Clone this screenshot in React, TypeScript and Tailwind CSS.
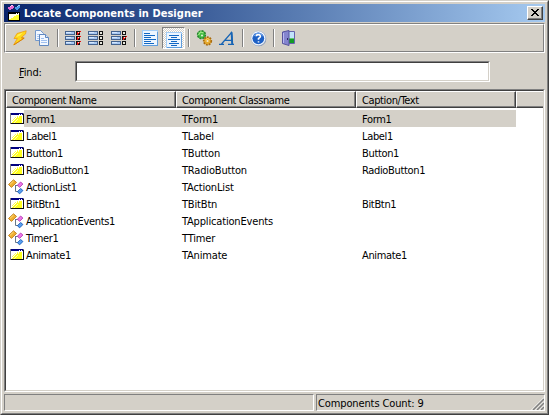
import React from "react";

type Row = { kind: "win" | "comp"; name: string; cls: string; cap: string };

const rows: Row[] = [
  { kind: "win", name: "Form1", cls: "TForm1", cap: "Form1" },
  { kind: "win", name: "Label1", cls: "TLabel", cap: "Label1" },
  { kind: "win", name: "Button1", cls: "TButton", cap: "Button1" },
  { kind: "win", name: "RadioButton1", cls: "TRadioButton", cap: "RadioButton1" },
  { kind: "comp", name: "ActionList1", cls: "TActionList", cap: "" },
  { kind: "win", name: "BitBtn1", cls: "TBitBtn", cap: "BitBtn1" },
  { kind: "comp", name: "ApplicationEvents1", cls: "TApplicationEvents", cap: "" },
  { kind: "comp", name: "Timer1", cls: "TTimer", cap: "" },
  { kind: "win", name: "Animate1", cls: "TAnimate", cap: "Animate1" },
];

const TitleIcon = () => (
  <svg width="16" height="16" viewBox="0 0 16 16" shapeRendering="crispEdges">
    <path d="M3 0h2v1h1v2H5v1H3v1H1V4H0V2h2V1h1z" fill="#e868d0" />
    <path d="M3 0h2v1H3zM2 1h1v1H2z" fill="#ffc0f0" />
    <path d="M10 0h2v3h-1v1h-1v1H8V4H7V2h2V1h1z" fill="#4898e8" />
    <path d="M10 0h2v1h-2zM9 1h1v1H9z" fill="#a0d0f8" />
    <path d="M0 7h12v9H0z" fill="#000" />
    <path d="M1 9h10v6H1z" fill="#ffff30" />
    <path d="M1 9h10v1H1zM1 10h7v1H1zM1 11h5v1H1zM1 12h4v1H1zM1 13h2v1H1z" fill="#fffff0" />
    <path d="M8 8h1v1H8zM10 8h1v1h-1z" fill="#fff" />
  </svg>
);

const WindowIcon = () => (
  <svg width="16" height="16" viewBox="0 0 16 16" shapeRendering="crispEdges">
    <path d="M2 3h14v11H2z" fill="#808080" />
    <path d="M3 13h13v1H3zM15 4h1v10h-1z" fill="#101010" />
    <path d="M3 4h12v9H3z" fill="#fff" />
    <path d="M3 3h12v2H3z" fill="#000080" />
    <path d="M11 4h1v1h-1zM13 4h1v1h-1z" fill="#fff" />
    <path d="M11 6h3v1h-3zM9 7h5v1H9zM8 8h6v1H8zM7 9h7v1H7zM6 10h8v1H6zM5 11h9v1H5zM4 12h10v1H4z" fill="#ffff20" />
    <path d="M9 6h1v1H9zM7 7h1v1H7zM6 8h1v1H6zM5 9h1v1H5zM4 10h1v1H4z" fill="#ffff50" />
    <path d="M10 7h1v1h-1zM9 9h1v1H9zM8 10h1v1H8zM7 11h1v1H7zM6 12h1v1H6z" fill="#ffffb0" />
  </svg>
);

const ComponentIcon = () => (
  <svg width="16" height="17" viewBox="0 -1 16 17">
    <path d="M7 6.5h4M7.5 6.5v6h4" stroke="#687888" fill="none" />
    <path d="M.5 5.5 5.5.8l3 2.600-5 5z" fill="#f0b030" stroke="#b87008" strokeWidth=".8" />
    <path d="M2 5.400 5.600 2" stroke="#ffe080" />
    <path d="m9.400 6.300 3.200-3.300 2.300 2-3.200 3.300z" fill="#ed78e8" stroke="#b43cb4" strokeWidth=".9" />
    <path d="m9.400 12.800 3.200-3.300 2.300 2-3.200 3.300z" fill="#58a0f0" stroke="#1558b8" strokeWidth=".9" />
  </svg>
);

const Lightning = () => (
  <svg width="16" height="16" viewBox="0 0 16 16">
    <path d="M15.200.8 6 3.500 3 8.600l3.400-.2L2.600 15 13.200 8.100 10.200 7.600 14.500 4z" fill="#ffd818" stroke="#f0a010" strokeWidth=".8" />
    <path d="M12 2.400 7 4.500 5 7.200l4-1.600z" fill="#fff258" />
    <path d="m3 14.800 10.100-6.600-2.500-.3" fill="none" stroke="#d98208" />
  </svg>
);

const Copy = () => (
  <svg width="16" height="16" viewBox="0 0 16 16">
    <path d="M1.500.5h5l3 3v7h-8z" fill="#f3f8ff" stroke="#7298cc" />
    <path d="M3 4.500h4M3 6.500h4M3 8.500h3" stroke="#a9c8f4" />
    <path d="M5.500 4.500h6l3 3v8h-9z" fill="#f3f8ff" stroke="#6088c0" />
    <path d="M11.500 4.500v3h3" fill="#d5e5fb" stroke="#6088c0" />
    <path d="M7 8.500h3M7 10.500h6M7 12.500h6" stroke="#9fc0f0" />
  </svg>
);

const ListIcon = ({ marks }: { marks: number[] }) => (
  <svg width="17" height="16" viewBox="0 0 17 16" shapeRendering="crispEdges">
    {[1, 6, 11].map((y, i) => (
      <g key={y}>
        <rect x="0" y={y} width="10" height="4" fill="#44638f" />
        <rect x="1" y={y + 1} width="8" height="2" fill="#a9c9f2" />
        <rect x="1" y={y + 1} width="5" height="1" fill="#d5e8ff" />
        <rect x="11" y={y} width="4" height="4" fill="#111" />
        <rect x="12" y={y + 1} width="2" height="2" fill="#e8e8df" />
        {marks.includes(i) && (
          <path d={`M12 ${y + 1}h1v1h1v-1h1v-1h1v1h-1v1h-1v1h-1v1h-1z`} fill="#e91010" />
        )}
      </g>
    ))}
  </svg>
);

const AlignIcon = ({ center }: { center?: boolean }) => (
  <svg width="16" height="16" viewBox="0 0 16 16" className="block shrink-0" shapeRendering="crispEdges">
    <rect x="0" y="0" width="16" height="16" fill="#a3cdf6" />
    <rect x="1" y="1" width="14" height="14" fill="#edf6ff" />
    <rect x="1" y="15" width="15" height="1" fill="#5f9ddc" />
    <rect x="15" y="2" width="1" height="13" fill="#5f9ddc" />
    <path
      d={center ? "M3 3h10v1H3zM5 5h6v1H5zM2 7h12v1H2zM5 9h6v1H5zM3 11h10v1H3zM5 13h6v1H5z" : "M2 3h6v1H2zM2 5h11v1H2zM2 7h7v1H2zM2 9h12v1H2zM2 11h7v1H2zM2 13h10v1H2z"}
      fill="#1268c4"
    />
  </svg>
);

const Gears = () => (
  <svg width="17" height="16" viewBox="0 0 17 16">
    <circle cx="5.500" cy="4.700" r="3.900" fill="#43b943" stroke="#26852c" strokeWidth="1.500" strokeDasharray="2 1" />
    <path d="M2.500 5 4.500 2l3 1" fill="none" stroke="#a0ec8a" strokeWidth="1.300" />
    <circle cx="6" cy="5.500" r="1" fill="#e9f4dd" />
    <circle cx="11.500" cy="11" r="3.800" fill="#e7aa2d" stroke="#a86b10" strokeWidth="1.700" strokeDasharray="1.800 1" />
    <path d="m9.500 10 2-1.500 2 1" fill="none" stroke="#ffd86c" />
    <circle cx="11.500" cy="11" r="1.100" fill="#f4ead0" />
  </svg>
);

const FontIcon = () => (
  <svg width="16" height="16" viewBox="0 0 16 16">
    <path d="M0 14.300h5M9 14.300h6M2.500 14 12.500 2.500l1 11.500M6 10.300h7" fill="none" stroke="#1764b4" strokeWidth="1.200" />
    <path d="m12.600 2.200.6 11.800" stroke="#1764b4" strokeWidth="1.900" />
  </svg>
);

const Help = () => (
  <svg width="17" height="17" viewBox="0 0 17 17">
    <circle cx="8.800" cy="8.800" r="7.500" fill="#8094b4" />
    <circle cx="8.300" cy="8.300" r="7.300" fill="#fafcff" stroke="#a8b8d0" strokeWidth=".6" />
    <circle cx="8.300" cy="8.300" r="5.900" fill="#1d60c5" />
    <path d="M3.800 6.300Q5.300 3 8.300 3T12.800 6.300" fill="none" stroke="#6ca2ec" />
    <path d="M6.200 6.300Q6.300 4.600 8.300 4.600T10.500 6.300Q10.500 7.500 8.500 8.500V9.800M8.500 11.200v1.400" fill="none" stroke="#fff" strokeWidth="1.600" />
  </svg>
);

const Door = () => (
  <svg width="16" height="16" viewBox="0 0 16 16">
    <path d="M5 1.500h8.500v12H5z" fill="#c2e3fb" stroke="#6664ac" />
    <path d="M8 9h5v4H8z" fill="#139b28" />
    <path d="M8 8.500h5" stroke="#65c772" />
    <path d="M1.500 2 8 .5v15l-6.500-2z" fill="#8585cf" stroke="#57549d" />
    <path d="M2.500 3v10" stroke="#bbb9f2" />
    <path d="M6.500 8v2" stroke="#302c6b" />
  </svg>
);

const Tool = ({ children, pressed }: { children: React.ReactNode; pressed?: boolean }) =>
  pressed ? (
    <div className="flex h-[22px] w-[23px] shrink-0 items-start border border-t-[#808080] border-l-[#808080] border-r-white border-b-white bg-[repeating-conic-gradient(#fff_0%_25%,#d4d0c8_0%_50%)] bg-[length:2px_2px] pt-1 pl-[3px]">
      {children}
    </div>
  ) : (
    <div className="flex h-[22px] w-[23px] shrink-0 items-center pl-[3px]">{children}</div>
  );

const Sep = () => (
  <div className="flex h-[22px] w-2 shrink-0 items-center justify-center">
    <div className="h-[18px] w-0.5 border-l border-r border-l-[#808080] border-r-white" />
  </div>
);

const Head = ({ children, width }: { children?: React.ReactNode; width: string }) => (
  <div className={`${width} h-[17px] shrink-0 border-t border-l border-r border-b border-t-white border-l-white border-r-[#404040] border-b-[#404040]`}>
    <div className="h-[15px] border-r border-b border-[#808080] pl-[5px] leading-[18px] tracking-[-0.38px]">{children}</div>
  </div>
);

export default function App() {
  return (
    <div className="flex h-[415px] w-[549px] flex-col overflow-hidden border border-t-[#d4d0c8] border-l-[#d4d0c8] border-r-[#404040] border-b-[#404040] bg-[#d4d0c8] font-['Tahoma','DejaVu_Sans_Condensed','DejaVu_Sans',sans-serif] text-[11px] tracking-[-0.17px] whitespace-nowrap text-black select-none">
      <div className="flex min-h-0 flex-1 flex-col border border-t-white border-l-white border-r-[#808080] border-b-[#808080] px-0.5 pt-0.5">
        <div className="flex h-[18px] w-[541px] shrink-0 items-center bg-linear-to-r from-[#0a246a] to-[#a6caf0] pr-0.5 pl-1">
          <TitleIcon />
          <span className="flex-1 pt-px text-[11px] leading-[18px] font-bold tracking-[0.04px] text-white">Locate Components in Designer</span>
          <button className="flex h-[14px] w-4 items-center justify-center border border-t-white border-l-white border-r-[#404040] border-b-[#404040] bg-[#d4d0c8]">
            <svg width="14" height="12" viewBox="0 0 14 12" shapeRendering="crispEdges">
              <path d="M13.500 0v11.500H0" fill="none" stroke="#808080" />
              <path d="M3 2h2v1h1v1h2V3h1V2h2v1h-1v1H9v1H8v1h1v1h1v1h1v1H9V8H8V7H6v1H5v1H3V8h1V7h1V6h1V5H5V4H4V3H3z" fill="#000" />
            </svg>
          </button>
        </div>

        <div className="mt-px h-[30px] w-[541px] shrink-0 border border-t-[#808080] border-l-[#808080] border-r-white border-b-white">
          <div className="flex h-7 items-center border border-t-white border-l-white border-r-[#808080] border-b-[#808080] pl-0.5">
            <Tool><Lightning /></Tool>
            <Tool><Copy /></Tool>
            <Sep />
            <Tool><ListIcon marks={[0, 1, 2]} /></Tool>
            <Tool><ListIcon marks={[]} /></Tool>
            <Tool><ListIcon marks={[1]} /></Tool>
            <Sep />
            <Tool><AlignIcon /></Tool>
            <Tool pressed><AlignIcon center /></Tool>
            <Sep />
            <Tool><Gears /></Tool>
            <Tool><FontIcon /></Tool>
            <Sep />
            <Tool><Help /></Tool>
            <Sep />
            <Tool><Door /></Tool>
          </div>
        </div>

        <div className="mt-2 flex h-[21px] shrink-0 items-center">
          <label className="w-[71px] pt-px pl-[15px] leading-[21px]"><span className="underline underline-offset-1">F</span>ind:</label>
          <div className="h-[21px] w-[415px] border border-t-[#808080] border-l-[#808080] border-r-white border-b-white">
            <input className="block h-[19px] w-full border border-t-[#404040] border-l-[#404040] border-r-[#d4d0c8] border-b-[#d4d0c8] bg-white px-1 outline-none" />
          </div>
        </div>

        <div className="mt-[7px] h-[303px] w-[541px] shrink-0 border border-t-[#808080] border-l-[#808080] border-r-white border-b-white">
          <div className="h-[301px] border border-t-[#404040] border-l-[#404040] border-r-[#d4d0c8] border-b-[#d4d0c8] bg-white">
            <div className="flex bg-[#d4d0c8]">
              <Head width="w-[170px]">Component Name</Head>
              <Head width="w-[180px]">Component Classname</Head>
              <Head width="w-[160px]">Caption/Text</Head>
              <div className="h-[17px] flex-1 border-t border-l border-b border-t-white border-l-white border-b-[#404040]">
                <div className="h-[15px] border-b border-[#808080]" />
              </div>
            </div>
            <div className="pt-0.5">
              {rows.map((r, i) => (
                <div key={r.name} className="flex h-[17px] leading-[19px]">
                  <div className="w-[18px] shrink-0 pl-0.5">{r.kind === "win" ? <WindowIcon /> : <ComponentIcon />}</div>
                  <div className={i === 0 ? "flex w-[492px] bg-[#d4d0c8]" : "flex w-[492px]"}>
                    <span className="w-[158px] pl-0.5 tracking-[-0.34px]">{r.name}</span>
                    <span className="w-[180px]">{r.cls}</span>
                    <span className="tracking-[-0.34px]">{r.cap}</span>
                  </div>
                </div>
              ))}
            </div>
          </div>
        </div>

        <div className="mt-0.5 flex h-[17px] w-[541px] shrink-0 gap-0.5">
          <div className="w-[310px] border border-t-[#808080] border-l-[#808080] border-r-white border-b-white" />
          <div className="flex flex-1 items-end justify-between border border-t-[#808080] border-l-[#808080] border-r-white border-b-white">
            <span className="h-[15px] pl-px leading-[18px] tracking-[-0.12px]">Components Count: 9</span>
            <svg width="13" height="13" viewBox="0 0 13 13">
              <path d="M.5 13 13 .5M4.500 13 13 4.500M8.500 13 13 8.500" stroke="#fff" />
              <path d="M2 13 13 2M6 13l7-7M10 13l3-3" stroke="#808080" strokeWidth="1.500" />
            </svg>
          </div>
        </div>
      </div>
    </div>
  );
}
